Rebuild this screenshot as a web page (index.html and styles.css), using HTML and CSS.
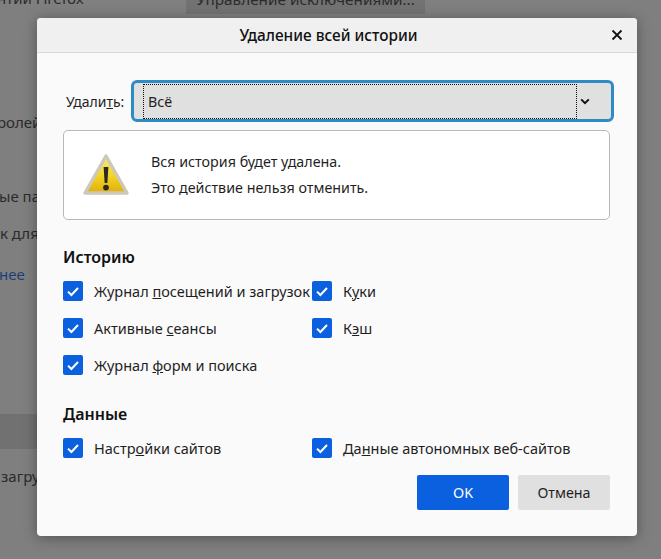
FILE: index.html
```html
<!DOCTYPE html>
<html>
  <head>
    <meta charset="utf-8">
    <title>Удаление всей истории</title>
    <link rel="stylesheet" href="styles.css">
  </head>
  <body>
    <div class="page">
      <div class="pageTop">
        <div class="pageTopText">нтии Firefox</div>
        <div class="pageTopBtn">Управление исключениями...</div>
      </div>
      <div class="pageLine lineOne">ролей</div>
      <div class="pageLine lineTwo">ые па</div>
      <div class="pageLine lineThree">к для</div>
      <div class="pageLine lineLink">нее</div>
      <div class="pageBand"></div>
      <div class="pageLine lineLast">загру</div>
    </div>

    <div class="dialog">
      <div class="dialogHead">
        <div class="dialogTitle">Удаление всей истории</div>
        <svg class="closeIcon" width="12" height="12" viewBox="0 0 12 12">
          <path d="M1.5 1.5 L10.5 10.5 M10.5 1.5 L1.5 10.5" stroke="#111" stroke-width="1.8" fill="none"/>
        </svg>
      </div>
      <div class="dialogBody">
        <div class="rangeRow">
          <span class="rangeLabel">Удали<u>т</u>ь:</span>
          <div class="select">
            <div class="selectValue">Всё</div>
            <svg class="selectArrow" width="10" height="7" viewBox="0 0 10 7">
              <path d="M1.2 1.4 L5 5.2 L8.8 1.4" stroke="#111" stroke-width="2" fill="none"/>
            </svg>
          </div>
        </div>

        <div class="warnBox">
          <svg class="warnIcon" width="48" height="44" viewBox="0 0 48 44">
            <defs>
              <linearGradient id="warnFill" x1="0" y1="0" x2="0" y2="1">
                <stop offset="0" stop-color="#f8ec80"/>
                <stop offset="0.55" stop-color="#f3d324"/>
                <stop offset="1" stop-color="#dfae0c"/>
              </linearGradient>
            </defs>
            <path d="M24 3 L45 40 L3 40 Z" fill="url(#warnFill)" stroke="#cdc9b8" stroke-width="3.4" stroke-linejoin="round"/>
            <path d="M21.6 14 L26.4 14 L25.4 30 L22.6 30 Z" fill="#2b2a20"/>
            <circle cx="24" cy="34.6" r="2.9" fill="#2b2a20"/>
          </svg>
          <div class="warnText">
            <div>Вся история будет удалена.</div>
            <div>Это действие нельзя отменить.</div>
          </div>
        </div>

        <div class="groupTitle historyTitle">Историю</div>
        <div class="checks">
          <div class="check"><span class="box"><svg width="14" height="11" viewBox="0 0 14 11"><path d="M2 5.6 L5.4 9 L12 2" stroke="#fff" stroke-width="2" fill="none"/></svg></span><span>Журнал <u>п</u>осещений и загрузок</span></div>
          <div class="check"><span class="box"><svg width="14" height="11" viewBox="0 0 14 11"><path d="M2 5.6 L5.4 9 L12 2" stroke="#fff" stroke-width="2" fill="none"/></svg></span><span>К<u>у</u>ки</span></div>
          <div class="check"><span class="box"><svg width="14" height="11" viewBox="0 0 14 11"><path d="M2 5.6 L5.4 9 L12 2" stroke="#fff" stroke-width="2" fill="none"/></svg></span><span>Активные <u>с</u>еансы</span></div>
          <div class="check"><span class="box"><svg width="14" height="11" viewBox="0 0 14 11"><path d="M2 5.6 L5.4 9 L12 2" stroke="#fff" stroke-width="2" fill="none"/></svg></span><span>К<u>э</u>ш</span></div>
          <div class="check"><span class="box"><svg width="14" height="11" viewBox="0 0 14 11"><path d="M2 5.6 L5.4 9 L12 2" stroke="#fff" stroke-width="2" fill="none"/></svg></span><span>Журнал <u>ф</u>орм и поиска</span></div>
        </div>

        <div class="groupTitle dataTitle">Данные</div>
        <div class="checks">
          <div class="check"><span class="box"><svg width="14" height="11" viewBox="0 0 14 11"><path d="M2 5.6 L5.4 9 L12 2" stroke="#fff" stroke-width="2" fill="none"/></svg></span><span>Настр<u>о</u>йки сайтов</span></div>
          <div class="check"><span class="box"><svg width="14" height="11" viewBox="0 0 14 11"><path d="M2 5.6 L5.4 9 L12 2" stroke="#fff" stroke-width="2" fill="none"/></svg></span><span>Да<u>н</u>ные автономных веб-сайтов</span></div>
        </div>

        <div class="buttons">
          <div class="btn btnOk">OK</div>
          <div class="btn">Отмена</div>
        </div>
      </div>
    </div>
  </body>
</html>
```

FILE: styles.css
```css
html, body {
  margin: 0;
  padding: 0;
}

body {
  width: 661px;
  height: 559px;
  overflow: hidden;
  background-color: #7f7f7f;
  font-family: "Noto Sans", "Open Sans", sans-serif;
  font-size: 14.3px;
  color: #1f1f1f;
}

/* page behind the overlay */
.page {
  margin-top: -8px;
  color: #2b2b2b;
  font-size: 15px;
  white-space: nowrap;
}

.pageTop {
  display: flex;
  height: 22px;
}

.pageTopText {
  width: 189px;
  margin-top: -4px;
  margin-left: -3px;
  line-height: 20px;
  flex-shrink: 0;
}

.pageTopBtn {
  width: 239px;
  background-color: #727272;
  font-size: 15.3px;
  text-align: center;
  line-height: 14px;
}

.pageLine {
  line-height: 20px;
}

.lineOne {
  margin-top: 98px;
  margin-left: -3px;
}

.lineTwo {
  margin-top: 54px;
  margin-left: -1px;
}

.lineThree {
  margin-top: 17px;
}

.lineLink {
  margin-top: 21px;
  color: #1c3f73;
  margin-left: -1px;
}

.pageBand {
  height: 35px;
  margin-top: 130px;
  width: 37px;
  background-color: #717171;
}

.lineLast {
  margin-top: 17px;
  margin-left: 1px;
}

/* dialog */
.dialog {
  position: absolute;
  left: 37px;
  top: 18px;
  width: 600px;
  height: 518px;
  background-color: #fafafa;
  border-radius: 4px;
  box-shadow: 0 2px 14px rgba(0, 0, 0, 0.35);
  overflow: hidden;
}

.dialogHead {
  display: flex;
  align-items: center;
  justify-content: center;
  height: 34px;
  padding-right: 17px;
  background-color: #f0f0f0;
  border-bottom: 1px solid #d8d8d8;
  position: relative;
}

.dialogTitle {
  font-size: 15.4px;
  font-weight: 500;
  color: #111;
}

.closeIcon {
  position: absolute;
  right: 14px;
  top: 11px;
}

.dialogBody {
  padding: 27px 27px 0 26px;
}

.rangeRow {
  display: flex;
  align-items: center;
  margin-right: -4px;
}

.rangeLabel {
  width: 68px;
  padding-left: 3px;
  box-sizing: border-box;
  font-size: 14px;
  flex-shrink: 0;
}

.select {
  display: flex;
  align-items: center;
  flex: 1;
  height: 42px;
  box-sizing: border-box;
  padding: 0 21px 0 9px;
  background-color: #e0e0e0;
  border: 3px solid #2f8bc4;
  border-radius: 6px;
}

.selectValue {
  flex: 1;
  height: 35px;
  line-height: 33px;
  box-sizing: border-box;
  padding-left: 4px;
  border: 1px dotted #111;
}

.selectArrow {
  margin-left: 3px;
}

.warnBox {
  display: flex;
  align-items: center;
  height: 90px;
  box-sizing: border-box;
  margin-top: 8px;
  padding-left: 18px;
  background-color: #fff;
  border: 1px solid #b8b8b8;
  border-radius: 5px;
}

.warnIcon {
  flex-shrink: 0;
}

.warnText {
  margin-left: 21px;
  line-height: 26px;
}

.groupTitle {
  font-size: 16px;
  font-weight: 600;
  color: #111;
  line-height: 20px;
}

.historyTitle {
  margin-top: 27px;
}

.dataTitle {
  margin-top: 29px;
}

.checks {
  display: grid;
  grid-template-columns: 249px 1fr;
  row-gap: 17px;
  margin-top: 14px;
}

.check {
  display: flex;
  align-items: center;
  gap: 11px;
  height: 20px;
  font-size: 14.5px;
  white-space: nowrap;
}

.box {
  display: flex;
  align-items: center;
  justify-content: center;
  width: 20px;
  height: 20px;
  background-color: #0a60df;
  border-radius: 2px;
  flex-shrink: 0;
}

.buttons {
  display: flex;
  justify-content: flex-end;
  gap: 9px;
  margin-top: 17px;
}

.btn {
  width: 92px;
  height: 35px;
  line-height: 35px;
  text-align: center;
  background-color: #e0e0e0;
  border-radius: 2px;
}

.btnOk {
  background-color: #0a60df;
  color: #fff;
}
```
